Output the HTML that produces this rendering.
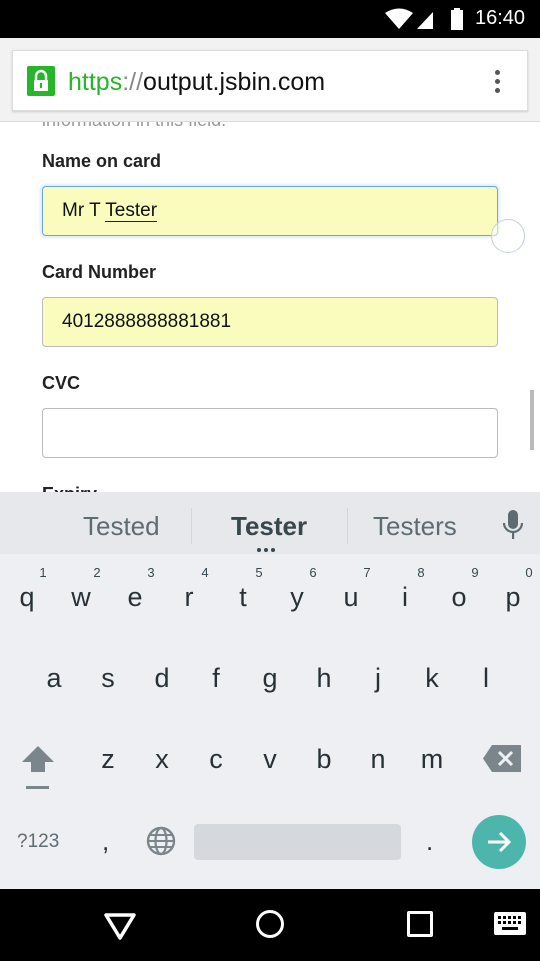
<!DOCTYPE html>
<html><head><style>
*{margin:0;padding:0;box-sizing:border-box}
body{width:540px;height:961px;position:relative;overflow:hidden;background:#fff;font-family:"Liberation Sans",sans-serif}
.a{position:absolute}
.k{position:absolute;width:54px;margin-left:-27px;text-align:center;font-size:27px;color:#263238;line-height:30px}
.n{position:absolute;width:20px;margin-left:-10px;text-align:center;font-size:13px;color:#37474f}
.lbl{position:absolute;left:42px;font-size:18px;font-weight:bold;color:#222}
.inp{position:absolute;left:42px;width:456px;height:50px;border:1px solid #bbb;border-radius:4px;font-size:19px;padding:13px 0 0 19px;color:#111}
</style></head><body>
<div class="a" style="left:42px;top:110px;font-size:18px;color:#999;line-height:20px">information in this field.</div>
<div class="a" style="left:0;top:0;width:540px;height:38px;background:#000"></div>
<svg class="a" style="left:385px;top:8px" width="90" height="24"><path d="M0 5 Q14 -4 28 5 L14 21Z" fill="#fff"/><path d="M32 21 L48 4 L48 21Z" fill="#fff"/><rect x="66" y="2" width="12" height="20" fill="#fff"/><rect x="69" y="0" width="6" height="3" fill="#fff"/></svg>
<div class="a" style="left:475px;top:7px;color:#fff;font-size:20px">16:40</div>
<div class="a" style="left:0;top:38px;width:540px;height:84px;background:#f2f2f2;border-bottom:1px solid #ddd"></div>
<div class="a" style="left:12px;top:50px;width:516px;height:61px;background:#fff;border:1px solid #ddd;box-shadow:0 1px 2px #ccc"></div>
<div class="a" style="left:27px;top:66px;width:28px;height:30px;background:#27b52a;border-radius:2px"></div>
<svg class="a" style="left:31px;top:69px" width="20" height="24"><path d="M5 11 V7 a5 5 0 0 1 10 0 V11" stroke="#fff" stroke-width="2.4" fill="none"/><rect x="3" y="11" width="14" height="11" fill="#fff"/><rect x="9" y="14" width="2" height="5" fill="#27b52a"/></svg>
<div class="a" style="left:68px;top:68px;font-size:25px;color:#111"><span style="color:#27b52a">https</span><span style="color:#888">://</span>output.jsbin.com</div>
<div class="a" style="left:495px;top:70px;width:5px;height:5px;border-radius:50%;background:#555;box-shadow:0 9px 0 #555,0 18px 0 #555"></div>
<div class="lbl" style="top:151px">Name on card</div>
<div class="inp" style="top:186px;background:#fafcbd;border-color:#6aa8e6;box-shadow:0 0 2px 2px #e0ecf8">Mr T <span style="border-bottom:1.5px solid #222">Tester</span></div>
<div class="a" style="left:491px;top:219px;width:34px;height:34px;border-radius:50%;border:1.5px solid #c5cfe8;background:rgba(255,255,255,.5)"></div>
<div class="lbl" style="top:262px">Card Number</div>
<div class="inp" style="top:297px;background:#fafcbd">4012888888881881</div>
<div class="lbl" style="top:373px">CVC</div>
<div class="inp" style="top:408px;background:#fff"></div>
<div class="a" style="left:530px;top:390px;width:4px;height:60px;background:#bbb"></div>
<div class="lbl" style="top:484px">Expiry</div>
<div class="a" style="left:0;top:492px;width:540px;height:62px;background:#e7e8eb"></div>
<div class="a" style="left:83px;top:511px;font-size:26px;color:#5f6b73">Tested</div>
<div class="a" style="left:191px;top:508px;width:1px;height:36px;background:#d3d5d8"></div>
<div class="a" style="left:231px;top:511px;font-size:26px;color:#37474f;font-weight:bold">Tester</div>
<div class="a" style="left:257px;top:548px;width:4px;height:4px;border-radius:50%;background:#37474f;box-shadow:7px 0 0 #37474f,14px 0 0 #37474f"></div>
<div class="a" style="left:347px;top:508px;width:1px;height:36px;background:#d3d5d8"></div>
<div class="a" style="left:373px;top:511px;font-size:26px;color:#5f6b73">Testers</div>
<svg class="a" style="left:499px;top:508px" width="28" height="34"><rect x="9" y="2" width="10" height="19" rx="5" fill="#5f6b73"/><path d="M5 15 a9 9 0 0 0 18 0" stroke="#5f6b73" stroke-width="2.2" fill="none"/><rect x="13" y="24" width="2.2" height="7" fill="#5f6b73"/></svg>
<div class="a" style="left:0;top:554px;width:540px;height:335px;background:#eeeff2"></div>
<div class="n" style="left:43px;top:565px">1</div><div class="n" style="left:97px;top:565px">2</div><div class="n" style="left:151px;top:565px">3</div><div class="n" style="left:205px;top:565px">4</div><div class="n" style="left:259px;top:565px">5</div><div class="n" style="left:313px;top:565px">6</div><div class="n" style="left:367px;top:565px">7</div><div class="n" style="left:421px;top:565px">8</div><div class="n" style="left:475px;top:565px">9</div><div class="n" style="left:529px;top:565px">0</div>
<div class="k" style="left:27px;top:582px">q</div><div class="k" style="left:81px;top:582px">w</div><div class="k" style="left:135px;top:582px">e</div><div class="k" style="left:189px;top:582px">r</div><div class="k" style="left:243px;top:582px">t</div><div class="k" style="left:297px;top:582px">y</div><div class="k" style="left:351px;top:582px">u</div><div class="k" style="left:405px;top:582px">i</div><div class="k" style="left:459px;top:582px">o</div><div class="k" style="left:513px;top:582px">p</div>
<div class="k" style="left:54px;top:663px">a</div><div class="k" style="left:108px;top:663px">s</div><div class="k" style="left:162px;top:663px">d</div><div class="k" style="left:216px;top:663px">f</div><div class="k" style="left:270px;top:663px">g</div><div class="k" style="left:324px;top:663px">h</div><div class="k" style="left:378px;top:663px">j</div><div class="k" style="left:432px;top:663px">k</div><div class="k" style="left:486px;top:663px">l</div>
<div class="k" style="left:108px;top:744px">z</div><div class="k" style="left:162px;top:744px">x</div><div class="k" style="left:216px;top:744px">c</div><div class="k" style="left:270px;top:744px">v</div><div class="k" style="left:324px;top:744px">b</div><div class="k" style="left:378px;top:744px">n</div><div class="k" style="left:432px;top:744px">m</div>
<svg class="a" style="left:19px;top:744px" width="38" height="46"><path d="M19 2 L35 18 H26 V28 H12 V18 H3Z" fill="#7b858c"/><rect x="7" y="42" width="23" height="3" fill="#7b858c"/></svg>
<svg class="a" style="left:483px;top:744px" width="40" height="30"><path d="M9 1 H38 V28 H9 L0 14.5Z" fill="#7b858c"/><path d="M16 8 L29 21 M29 8 L16 21" stroke="#eeeff2" stroke-width="3"/></svg>
<div class="a" style="left:17px;top:831px;font-size:19px;color:#5f6b73">?123</div>
<div class="a" style="left:102px;top:826px;font-size:26px;color:#263238">,</div>
<svg class="a" style="left:146px;top:826px" width="30" height="30"><circle cx="15" cy="15" r="13" fill="none" stroke="#7b858c" stroke-width="2.4"/><ellipse cx="15" cy="15" rx="5.5" ry="13" fill="none" stroke="#7b858c" stroke-width="2.2"/><path d="M2 15 H28 M4 9 H26 M4 21 H26" stroke="#7b858c" stroke-width="2"/></svg>
<div class="a" style="left:194px;top:824px;width:207px;height:36px;background:#d5d8dc;border-radius:4px"></div>
<div class="a" style="left:426px;top:826px;font-size:26px;color:#263238">.</div>
<div class="a" style="left:472px;top:815px;width:54px;height:54px;border-radius:50%;background:#4db6ac"></div>
<svg class="a" style="left:485px;top:828px" width="28" height="28"><path d="M3 14 H24 M15 5 L24 14 L15 23" stroke="#fff" stroke-width="3" fill="none"/></svg>
<div class="a" style="left:0;top:889px;width:540px;height:72px;background:#000"></div>
<svg class="a" style="left:100px;top:910px" width="40" height="32"><path d="M6 5 H34 L20 28Z" fill="none" stroke="#fff" stroke-width="3.5" stroke-linejoin="round"/></svg>
<div class="a" style="left:256px;top:910px;width:28px;height:28px;border-radius:50%;border:3.5px solid #fff"></div>
<div class="a" style="left:407px;top:911px;width:26px;height:26px;border:3.5px solid #fff;border-radius:2px"></div>
<svg class="a" style="left:494px;top:912px" width="32" height="24"><rect x="0" y="0" width="32" height="23" rx="2" fill="#fff"/><g fill="#000"><rect x="4" y="4" width="3" height="3"/><rect x="9" y="4" width="3" height="3"/><rect x="14" y="4" width="3" height="3"/><rect x="19" y="4" width="3" height="3"/><rect x="24" y="4" width="3" height="3"/><rect x="4" y="9" width="3" height="3"/><rect x="9" y="9" width="3" height="3"/><rect x="14" y="9" width="3" height="3"/><rect x="19" y="9" width="3" height="3"/><rect x="24" y="9" width="3" height="3"/><rect x="8" y="15" width="16" height="3"/></g></svg>
</body></html>
